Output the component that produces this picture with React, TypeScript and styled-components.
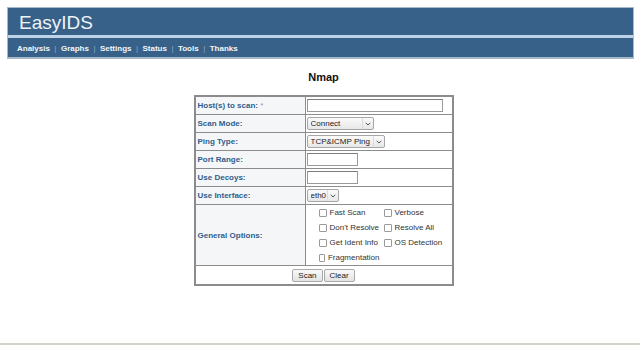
import React from "react";
import styled, { createGlobalStyle } from "styled-components";

const Global = createGlobalStyle`
  html, body { margin: 0; padding: 0; background: #ffffff; }
  body { font-family: "Liberation Sans", Arial, Helvetica, sans-serif; }
  * { box-sizing: border-box; }
`;

const Page = styled.div`
  height: 345px;
  padding: 7px 6px 0 7px;
  border-bottom: 2px solid #d3d3cb;
  display: flex;
  flex-direction: column;
  align-items: stretch;
`;

const Header = styled.header`
  border: 1px solid #a7b8c9;
  border-bottom-width: 2px;
  background: #376189;
  display: flex;
  flex-direction: column;
`;

const Title = styled.h1`
  margin: 0;
  height: 30px;
  line-height: 30px;
  padding-left: 11px;
  font-size: 19px;
  font-weight: normal;
  color: #eef3f8;
  border-bottom: 3px solid #bfd3e8;
`;

const Nav = styled.nav`
  height: 19px;
  display: flex;
  align-items: center;
  padding: 1px 0 0 9px;
`;

const NavLink = styled.a`
  font-size: 8px;
  font-weight: bold;
  color: #f3f6fa;
  text-decoration: none;
  white-space: nowrap;
`;

const Sep = styled.span`
  width: 11px;
  text-align: center;
  font-size: 8px;
  color: #8ea7bf;
`;

const Main = styled.main`
  display: flex;
  flex-direction: column;
  align-items: center;
  padding-left: 6px;
`;

const Heading = styled.h2`
  margin: 12px 0 11px;
  font-size: 11px;
  line-height: 13px;
  font-weight: bold;
  color: #111;
`;

const FormTable = styled.table`
  width: 260px;
  table-layout: fixed;
  border-collapse: separate;
  border-spacing: 0;
  border: 2px solid #8c8c8c;
`;

const LabelCell = styled.td`
  width: 110px;
  padding: 2px 2px;
  line-height: 13px;
  font-size: 8px;
  font-weight: bold;
  color: #2f5e8c;
  background: #f5f6f7;
  border-right: 1px solid #8c8c8c;
  border-bottom: 1px solid #8c8c8c;
  vertical-align: middle;
  white-space: nowrap;
`;

const ValueCell = styled.td`
  padding: 2px 1px;
  line-height: 13px;
  border-bottom: 1px solid #8c8c8c;
  vertical-align: middle;
`;

const OptionsCell = styled.td`
  padding: 0 0 0 13px;
  border-bottom: 1px solid #8c8c8c;
  vertical-align: middle;
`;

const ActionCell = styled.td`
  padding: 2px 0;
  line-height: 13px;
  text-align: center;
  vertical-align: middle;
`;

const Star = styled.span`
  color: #8fa3b6;
  font-weight: normal;
`;

const TextInput = styled.input<{ $w: number }>`
  display: block;
  width: ${(p) => p.$w}px;
  height: 13px;
  margin: 0;
  padding: 0 2px;
  border: 1px solid #9a9a9a;
  border-top-color: #7d7d7d;
  background: #fff;
  font: 8px "Liberation Sans", Arial, sans-serif;
`;

const SelectBox = styled.span<{ $w: number }>`
  display: flex;
  align-items: stretch;
  width: ${(p) => p.$w}px;
  height: 13px;
  border: 1px solid #a6a6a6;
  border-radius: 2px;
  background: linear-gradient(#fbfbfb, #e7e7e7);
  overflow: hidden;
`;

const NativeSelect = styled.select`
  appearance: none;
  -webkit-appearance: none;
  flex: 1;
  min-width: 0;
  height: 11px;
  margin: 0;
  padding: 0 0 0 3px;
  border: 0;
  background: transparent;
  font: 8px/11px "Liberation Sans", Arial, sans-serif;
  color: #222;
  outline: none;
`;

const Chevron = styled.span`
  width: 11px;
  display: flex;
  align-items: center;
  justify-content: center;
  border-left: 1px solid #dcdcdc;
`;

const Options = styled.div`
  display: grid;
  grid-template-columns: 61px auto;
  column-gap: 4px;
`;

const Opt = styled.label`
  display: flex;
  align-items: center;
  gap: 3px;
  height: 15px;
  font-size: 8px;
  color: #333;
  white-space: nowrap;
`;

const Check = styled.input`
  appearance: none;
  -webkit-appearance: none;
  width: 8px;
  height: 8px;
  margin: 0;
  border: 1px solid #9a9a9a;
  border-radius: 1px;
  background: #fff;
`;

const Buttons = styled.div`
  display: inline-flex;
  vertical-align: middle;
  gap: 1px;
`;

const Button = styled.button`
  height: 13px;
  padding: 0 5px;
  margin: 0;
  border: 1px solid #a8a8a8;
  border-radius: 2px;
  background: linear-gradient(#f9f9f9, #e3e3e3);
  font: 8px/11px "Liberation Sans", Arial, sans-serif;
  color: #222;
`;

const ChevronIcon = () => (
  <svg width="6" height="4" viewBox="0 0 6 4" aria-hidden="true">
    <path d="M0.7 0.8 L3 3 L5.3 0.8" fill="none" stroke="#444" strokeWidth="0.9" />
  </svg>
);

const Select = ({ w, value }: { w: number; value: string }) => (
  <SelectBox $w={w}>
    <NativeSelect defaultValue={value}>
      <option>{value}</option>
    </NativeSelect>
    <Chevron>
      <ChevronIcon />
    </Chevron>
  </SelectBox>
);

const navItems = ["Analysis", "Graphs", "Settings", "Status", "Tools", "Thanks"];

const options = [
  "Fast Scan",
  "Verbose",
  "Don't Resolve",
  "Resolve All",
  "Get Ident Info",
  "OS Detection",
  "Fragmentation",
];

export default function App() {
  return (
    <>
      <Global />
      <Page>
        <Header>
          <Title>EasyIDS</Title>
          <Nav>
            {navItems.map((item, i) => (
              <React.Fragment key={item}>
                {i > 0 && <Sep>|</Sep>}
                <NavLink href="#">{item}</NavLink>
              </React.Fragment>
            ))}
          </Nav>
        </Header>
        <Main>
          <Heading>Nmap</Heading>
          <FormTable>
            <tbody>
              <tr>
                <LabelCell>
                  Host(s) to scan: <Star>*</Star>
                </LabelCell>
                <ValueCell>
                  <TextInput $w={136} type="text" />
                </ValueCell>
              </tr>
              <tr>
                <LabelCell>Scan Mode:</LabelCell>
                <ValueCell>
                  <Select w={67} value="Connect" />
                </ValueCell>
              </tr>
              <tr>
                <LabelCell>Ping Type:</LabelCell>
                <ValueCell>
                  <Select w={78} value="TCP&ICMP Ping" />
                </ValueCell>
              </tr>
              <tr>
                <LabelCell>Port Range:</LabelCell>
                <ValueCell>
                  <TextInput $w={51} type="text" />
                </ValueCell>
              </tr>
              <tr>
                <LabelCell>Use Decoys:</LabelCell>
                <ValueCell>
                  <TextInput $w={51} type="text" />
                </ValueCell>
              </tr>
              <tr>
                <LabelCell>Use Interface:</LabelCell>
                <ValueCell>
                  <Select w={32} value="eth0" />
                </ValueCell>
              </tr>
              <tr>
                <LabelCell>General Options:</LabelCell>
                <OptionsCell>
                  <Options>
                    {options.map((o) => (
                      <Opt key={o}>
                        <Check type="checkbox" />
                        {o}
                      </Opt>
                    ))}
                  </Options>
                </OptionsCell>
              </tr>
              <tr>
                <ActionCell colSpan={2}>
                  <Buttons>
                    <Button type="button">Scan</Button>
                    <Button type="button">Clear</Button>
                  </Buttons>
                </ActionCell>
              </tr>
            </tbody>
          </FormTable>
        </Main>
      </Page>
    </>
  );
}
